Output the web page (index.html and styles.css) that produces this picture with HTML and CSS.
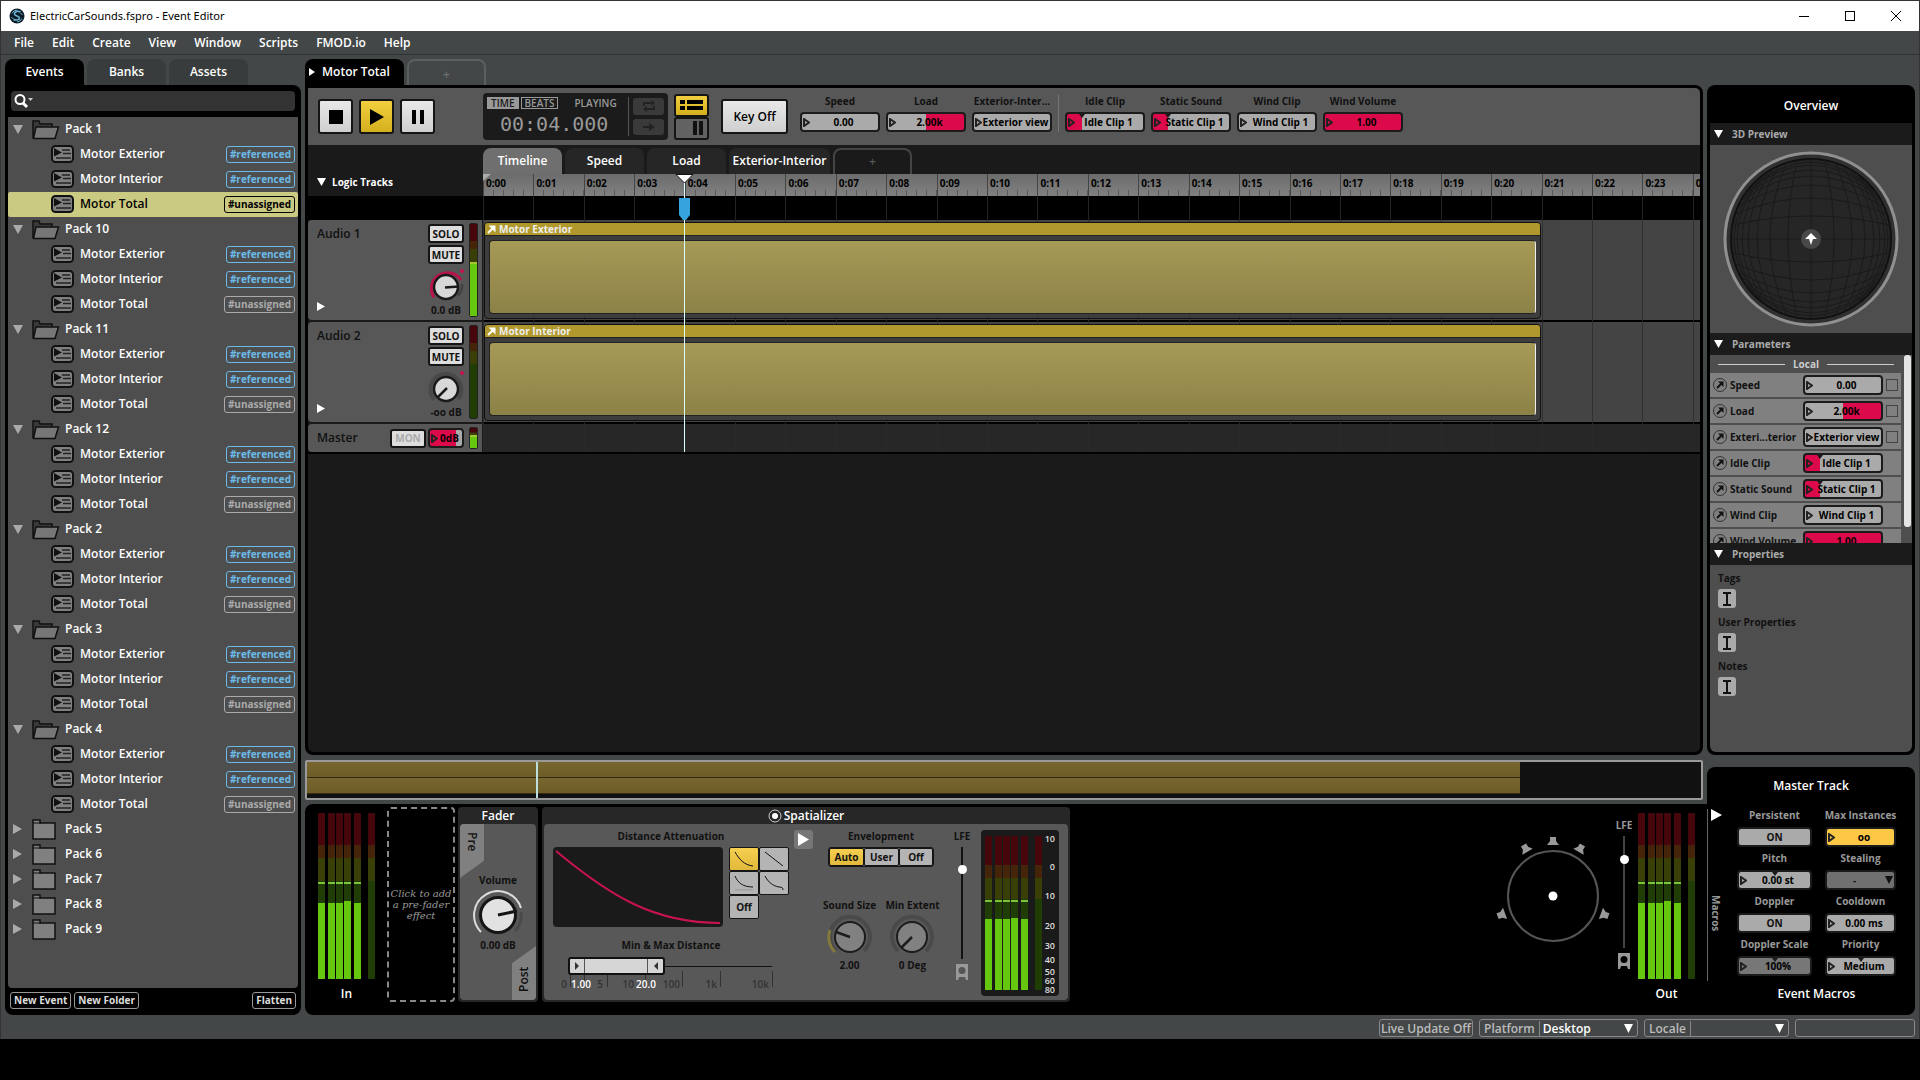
FILE: index.html
```
<!DOCTYPE html>
<html lang="en">
<head>
    <meta charset="UTF-8">
    <meta name="viewport" content="width=device-width, initial-scale=1.0">
    <title>ElectricCarSounds.fspro - Event Editor</title>
    <link rel="stylesheet" href="styles.css">
</head>
<body>

<div class="app">
    <header class="titlebar">
        <svg class="logo" width="16" height="16" viewBox="0 0 16 16">
            <circle cx="8" cy="8" r="7.5" fill="#0c1c26"/>
            <path d="M11.5 4C8 2.500 5 4 5.500 6.300c.5 2 5 1.500 5 3.700 0 2-3.500 2.500-6 1.500" fill="none" stroke="#6fb6d6" stroke-width="1.500"/>
            <path d="M3 5.500a6 6 0 0 1 5-3.500M13 10.500a6 6 0 0 1-5 3.500M2.500 9c.5 1 1 1.500 2 1.500M13.500 7c-.5-1-1-1.500-2-1.500" fill="none" stroke="#6fb6d6"/>
        </svg>
        <span class="title">ElectricCarSounds.fspro - Event Editor</span>
        <button class="win-btn" aria-label="Minimize"><svg width="10" height="10"><path d="M0 5.500h10" stroke="#000"/></svg></button>
        <button class="win-btn" aria-label="Maximize"><svg width="10" height="10"><rect x=".5" y=".5" width="9" height="9" fill="none" stroke="#000"/></svg></button>
        <button class="win-btn" aria-label="Close"><svg width="10" height="10"><path d="M0 0l10 10M10 0L0 10" stroke="#000"/></svg></button>
    </header>

    <nav class="menubar">
        <button>File</button>
        <button>Edit</button>
        <button>Create</button>
        <button>View</button>
        <button>Window</button>
        <button>Scripts</button>
        <button>FMOD.io</button>
        <button>Help</button>
    </nav>

    <div class="workspace">

        <!-- Event browser -->
        <aside class="browser">
            <div class="tabs">
                <button class="tab active">Events</button>
                <button class="tab">Banks</button>
                <button class="tab">Assets</button>
            </div>
            <div class="browser-panel">
                <label class="search">
                    <svg width="20" height="16" viewBox="0 0 20 16"><circle cx="6" cy="6.500" r="4.500" fill="none" stroke="#fff" stroke-width="2"/><path d="M9 10l4 4" stroke="#fff" stroke-width="3"/><path d="M14 5h5l-2.500 3z" fill="#ccc"/></svg>
                    <input type="text" aria-label="Search events">
                </label>
                <ul class="tree" id="tree"></ul>
                <div class="browser-footer">
                    <button>New Event</button>
                    <button>New Folder</button>
                    <button class="push">Flatten</button>
                </div>
            </div>
        </aside>

        <div class="main">
            <div class="upper">
                <div class="center">
                    <div class="tabs">
                        <button class="tab active event-tab"><svg width="6" height="8"><path d="M0 0l6 4-6 4z" fill="#fff"/></svg>Motor Total</button>
                        <button class="tab add">+</button>
                    </div>

                    <section class="editor">
                        <div class="toolbar">
                            <button class="transport" aria-label="Stop"><svg width="14" height="14"><rect width="14" height="14"/></svg></button>
                            <button class="transport on" aria-label="Play"><svg width="14" height="16"><path d="M0 0l14 8-14 8z"/></svg></button>
                            <button class="transport" aria-label="Pause"><svg width="12" height="14"><path d="M0 0h4v14H0zM8 0h4v14H8z"/></svg></button>

                            <div class="clock">
                                <div class="clock-main">
                                    <div class="clock-modes">
                                        <button class="mode on">TIME</button>
                                        <button class="mode">BEATS</button>
                                        <span>PLAYING</span>
                                    </div>
                                    <div class="time">00:04.000</div>
                                </div>
                                <div class="clock-side">
                                    <button aria-label="Loop"><svg width="14" height="12" fill="none" stroke="#222" stroke-width="2"><path d="M2 6V3h8M12 6v3H4"/><path d="M9 0l4 3-4 3zM5 6L1 9l4 3z" fill="#222" stroke="none"/></svg></button>
                                    <button aria-label="Follow"><svg width="12" height="8"><path d="M0 3h6V0l6 4-6 4V5H0z" fill="#222"/></svg></button>
                                </div>
                            </div>

                            <div class="view-toggle">
                                <button class="on" aria-label="Tracks view"><svg width="23" height="10"><path d="M0 0h5v4H0zM7 0h16v4H7zM0 6h5v4H0zM7 6h16v4H7z"/></svg></button>
                                <button aria-label="Mixer view"><svg width="23" height="14"><path d="M13 0h4v14h-4zM19 0h4v14h-4z" fill="#111"/></svg></button>
                            </div>

                            <button class="keyoff">Key Off</button>

                            <div class="param-strip" id="strip"></div>
                        </div>

                        <div class="timeline">
                            <div class="sheet-head">
                                <svg width="9" height="8"><path d="M0 0h9L4.500 8z" fill="#fff"/></svg>Logic Tracks
                            </div>
                            <div class="sheet">
                                <div class="tabs">
                                    <button class="tab current">Timeline</button>
                                    <button class="tab">Speed</button>
                                    <button class="tab">Load</button>
                                    <button class="tab wide">Exterior-Interior</button>
                                    <button class="tab add">+</button>
                                </div>
                                <div class="ruler" id="ruler"></div>
                            </div>

                            <div class="logic-head"></div>
                            <div class="lane logic-lane"></div>

                            <div class="track-head">
                                <span class="name">Audio 1</span>
                                <button class="fold" aria-label="Expand Audio 1"><svg width="8" height="9"><path d="M0 0l8 4.500L0 9z" fill="#fff"/></svg></button>
                                <div class="track-ctl">
                                    <button class="small-btn">SOLO</button>
                                    <button class="small-btn">MUTE</button>
                                    <svg width="38" height="34" viewBox="0 0 38 34"><path d="M7 29.500A15.500 15.500 0 1 1 34 12" fill="none" stroke="#b8134a" stroke-width="3"/><path d="M35 16a16 16 0 0 1-4 12" fill="none" stroke="#444" stroke-width="3"/><circle cx="35" cy="3" r="2" fill="#c8144c"/><circle cx="19" cy="19" r="12" fill="#d8d8d8" stroke="#1a1a1a" stroke-width="2.500"/><path d="M18 19.500l14-1" stroke="#1a1a1a" stroke-width="2.500"/></svg>
                                    <span class="db">0.0 dB</span>
                                </div>
                                <div class="track-meter" data-level="59"></div>
                            </div>
                            <div class="lane">
                                <article class="clip"><h4><svg width="9" height="9"><path d="M1 8l5-5M4 1.500h3.500V5z" stroke="#fff" stroke-width="2" fill="#fff"/></svg>Motor Exterior</h4><div class="wave"></div></article>
                            </div>

                            <div class="track-head">
                                <span class="name">Audio 2</span>
                                <button class="fold" aria-label="Expand Audio 2"><svg width="8" height="9"><path d="M0 0l8 4.500L0 9z" fill="#fff"/></svg></button>
                                <div class="track-ctl">
                                    <button class="small-btn">SOLO</button>
                                    <button class="small-btn">MUTE</button>
                                    <svg width="38" height="34" viewBox="0 0 38 34"><path d="M7 29.500A15.500 15.500 0 1 1 31 29" fill="none" stroke="#494949" stroke-width="4"/><circle cx="35" cy="3" r="2" fill="#c8144c"/><circle cx="19" cy="19" r="12" fill="#d8d8d8" stroke="#1a1a1a" stroke-width="2.500"/><path d="M20 18L11 27" stroke="#1a1a1a" stroke-width="2.500"/></svg>
                                    <span class="db">-oo dB</span>
                                </div>
                                <div class="track-meter" data-level="0"></div>
                            </div>
                            <div class="lane">
                                <article class="clip"><h4><svg width="9" height="9"><path d="M1 8l5-5M4 1.500h3.500V5z" stroke="#fff" stroke-width="2" fill="#fff"/></svg>Motor Interior</h4><div class="wave"></div></article>
                            </div>

                            <div class="track-head master">
                                <span class="name">Master</span>
                                <button class="small-btn mon">MON</button>
                                <label class="field gain"><svg width="7" height="9"><path d="M1 1l5 3.500L1 8z" fill="none" stroke="#222" stroke-width="2"/></svg><input type="text" value="0dB" aria-label="Master volume"></label>
                                <div class="track-meter" data-level="66"></div>
                            </div>
                            <div class="lane master-lane"></div>

                            <div class="grid-overlay" id="gridlines"></div>
                            <div class="playhead-area">
                                <div class="start-flag"></div>
                                <div class="playhead"><svg width="19" height="46" viewBox="0 0 19 46"><path d="M1 .5h17L9.500 9z" fill="#fff" stroke="#111"/><path d="M4 24h11v17l-4 5H8l-4-5z" fill="#37a3dc"/></svg></div>
                            </div>
                        </div>
                    </section>

                    <div class="overview-bar">
                        <div class="ov-track"></div>
                        <div class="ov-track"></div>
                        <div class="ov-head"></div>
                    </div>
                </div>

                <!-- Overview -->
                <aside class="side">
                    <section class="overview">
                        <h2>Overview</h2>
                        <h3><svg width="9" height="8"><path d="M0 0h9L4.500 8z" fill="#fff"/></svg>3D Preview</h3>
                        <div class="preview"><svg id="sphere" width="176" height="176" viewBox="-88 -88 176 176"></svg></div>
                        <h3><svg width="9" height="8"><path d="M0 0h9L4.500 8z" fill="#fff"/></svg>Parameters</h3>
                        <div class="params">
                            <div class="params-list">
                                <div class="local">Local</div>
                                <div id="params"></div>
                            </div>
                            <div class="scroll-thumb"></div>
                        </div>
                        <h3><svg width="9" height="8"><path d="M0 0h9L4.500 8z" fill="#fff"/></svg>Properties</h3>
                        <div class="props">
                            <span>Tags</span>
                            <button aria-label="Edit tags"><svg width="8" height="14"><path d="M0 1h3l1 1 1-1h3M4 2v10M0 13h3l1-1 1 1h3" fill="none" stroke="#111" stroke-width="2"/></svg></button>
                            <span>User Properties</span>
                            <button aria-label="Edit user properties"><svg width="8" height="14"><path d="M0 1h3l1 1 1-1h3M4 2v10M0 13h3l1-1 1 1h3" fill="none" stroke="#111" stroke-width="2"/></svg></button>
                            <span>Notes</span>
                            <button aria-label="Edit notes"><svg width="8" height="14"><path d="M0 1h3l1 1 1-1h3M4 2v10M0 13h3l1-1 1 1h3" fill="none" stroke="#111" stroke-width="2"/></svg></button>
                        </div>
                    </section>
                    <h2 class="master-title">Master Track</h2>
                </aside>
            </div>

            <!-- Signal chain -->
            <section class="deck">
                <div class="io">
                    <div class="meter"></div>
                    <strong>In</strong>
                </div>
                <button class="add-effect">Click to add a pre-fader effect</button>

                <div class="module fader">
                    <h3>Fader</h3>
                    <div class="module-body">
                        <span class="flag pre">Pre</span>
                        <span class="label">Volume</span>
                        <svg width="54" height="54" viewBox="-27 -27 54 54"><path d="M-17 17A24 24 0 1 1 23-7" fill="none" stroke="#ddd" stroke-width="2"/><path d="M23-3a23 23 0 0 1-6 19" fill="none" stroke="#4a4a4a" stroke-width="3"/><circle r="17.500" fill="#e2e2e2" stroke="#151515" stroke-width="3"/><path d="M0 0l19-4" stroke="#151515" stroke-width="3"/></svg>
                        <span class="label value">0.00 dB</span>
                        <span class="flag post">Post</span>
                    </div>
                </div>

                <div class="module spatializer">
                    <h3><svg width="14" height="14"><circle cx="7" cy="7" r="6" fill="none" stroke="#ccc"/><circle cx="7" cy="7" r="3" fill="#fff"/></svg>Spatializer</h3>
                    <div class="module-body">
                        <div class="distance">
                            <span class="label">Distance Attenuation</span>
                            <div class="curve-row">
                                <svg class="curve" width="170" height="80" viewBox="0 0 170 80"><rect width="170" height="80" rx="4" fill="#1a1a1a"/><path d="M3 4C58 50 102 76 167 76" fill="none" stroke="#c8134f" stroke-width="2"/></svg>
                                <div class="shapes">
                                    <button class="on" aria-label="Quadratic"><svg width="20" height="16"><path d="M1 1c4 7 9 13 18 14" fill="none" stroke="#111"/></svg></button>
                                    <button aria-label="Linear"><svg width="20" height="16"><path d="M1 1l18 14" stroke="#111"/></svg></button>
                                    <button aria-label="Inverse"><svg width="20" height="16"><path d="M1 1c3 7 8 11 18 11" fill="none" stroke="#111"/><path d="M1 15h18" stroke="#999"/></svg></button>
                                    <button aria-label="Inverse tapered"><svg width="20" height="16"><path d="M1 1c3 6 8 10 14 11 3 0 4 1 4 3" fill="none" stroke="#111"/></svg></button>
                                    <button>Off</button>
                                </div>
                            </div>
                            <span class="label">Min &amp; Max Distance</span>
                            <div class="minmax">
                                <svg width="210" height="36" viewBox="0 0 210 36">
                                    <path d="M96 9.500h108" stroke="#111"/>
                                    <path d="M2.500 14v16M16.500 14v10M39.500 14v16M77.500 14v10M114.500 14v16M152.500 14v16M204.500 14v16" stroke="#333"/>
                                    <rect x="1" y="1" width="95" height="16" rx="2" fill="#d6d6d6" stroke="#111" stroke-width="2"/>
                                    <path d="M16.500 2v14M79.500 2v14" stroke="#555"/>
                                    <path d="M7 5l4 4-4 4zM90 5l-4 4 4 4z" fill="#333"/>
                                </svg>
                                <input type="range" min="0" max="100" value="8" aria-label="Minimum distance">
                                <input type="range" min="0" max="100" value="43" aria-label="Maximum distance">
                                <div class="scale">
                                    <span>0</span><b>1.00</b><span>5</span><span>10</span><b>20.0</b><span>100</span><span>1k</span><span>10k</span>
                                </div>
                            </div>
                        </div>
                        <button class="expand" aria-label="Show more"><svg width="11" height="13"><path d="M0 0l11 6.500L0 13z" fill="#fff"/></svg></button>
                        <div class="envelop">
                            <span class="label">Envelopment</span>
                            <div class="segments"><button class="on">Auto</button><button>User</button><button>Off</button></div>
                            <div class="knobs">
                                <div>
                                    <span class="label">Sound Size</span>
                                    <svg width="46" height="46" viewBox="-23 -23 46 46"><path d="M-14 14A20 20 0 1 1 14 14" fill="none" stroke="#4a4a4a" stroke-width="4"/><path d="M-15 15A21 21 0 0 1-20-7" fill="none" stroke="#837a3d" stroke-width="3"/><circle r="15" fill="#818181" stroke="#1c1c1c" stroke-width="2"/><path d="M0 0l-14-5" stroke="#1c1c1c" stroke-width="2.500"/></svg>
                                    <span class="label">2.00</span>
                                </div>
                                <div>
                                    <span class="label">Min Extent</span>
                                    <svg width="46" height="46" viewBox="-23 -23 46 46"><path d="M-14 14A20 20 0 1 1 14 14" fill="none" stroke="#4a4a4a" stroke-width="4"/><circle r="15" fill="#818181" stroke="#1c1c1c" stroke-width="2"/><path d="M0 0l-11 11" stroke="#1c1c1c" stroke-width="2.500"/></svg>
                                    <span class="label">0 Deg</span>
                                </div>
                            </div>
                        </div>
                        <div class="lfe dark">
                            <label for="lfe1">LFE</label>
                            <input id="lfe1" type="range" min="0" max="100" value="83">
                            <svg width="12" height="16" viewBox="0 0 12 16"><path d="M0 0h12v16h-2l-1-3H3l-1 3H0z" fill="#999"/><circle cx="6" cy="6.500" r="3.500" fill="#555"/></svg>
                        </div>
                        <div class="meter-box">
                            <div class="meter"></div>
                            <div class="meter-scale"><span>10</span><span>0</span><span>10</span><span>20</span><span>30</span><span>40</span><span>50</span><span>60</span><span>80</span></div>
                        </div>
                    </div>
                </div>

                <div class="panner">
                    <svg width="118" height="110" viewBox="-59 -60 118 110">
                        <circle r="45" fill="none" stroke="#555" stroke-width="2"/>
                        <circle r="4.500" fill="#fff"/>
                        <g fill="#999">
                            <path id="spk" d="M-3-59h6v4l3 4H-6l3-4z"/>
                            <use href="#spk" transform="rotate(-30)"/>
                            <use href="#spk" transform="rotate(30)"/>
                            <use href="#spk" transform="rotate(-110)"/>
                            <use href="#spk" transform="rotate(110)"/>
                        </g>
                    </svg>
                </div>
                <div class="lfe">
                    <label for="lfe2">LFE</label>
                    <input id="lfe2" type="range" min="0" max="100" value="82">
                    <svg width="12" height="16" viewBox="0 0 12 16"><path d="M0 0h12v16h-2l-1-3H3l-1 3H0z" fill="#999"/><circle cx="6" cy="6.500" r="3.500" fill="#000"/></svg>
                </div>
                <div class="io out">
                    <div class="meter"></div>
                    <strong>Out</strong>
                </div>

                <div class="macros">
                    <div class="macros-side">
                        <svg width="11" height="12"><path d="M0 0l11 6-11 6z" fill="#fff"/></svg>
                        <span>Macros</span>
                    </div>
                    <div class="macros-main">
                        <div class="macro-grid">
                            <div class="macro"><span>Persistent</span><button>ON</button></div>
                            <div class="macro"><label for="m-max">Max Instances</label><div class="field gold"><svg width="7" height="9"><path d="M1 1l5 3.500L1 8z" fill="none" stroke="#222" stroke-width="2"/></svg><input id="m-max" type="text" value="oo"></div></div>
                            <div class="macro"><label for="m-pitch">Pitch</label><div class="field notch"><svg width="7" height="9"><path d="M1 1l5 3.500L1 8z" fill="none" stroke="#222" stroke-width="2"/></svg><input id="m-pitch" type="text" value="0.00 st"></div></div>
                            <div class="macro"><label for="m-steal">Stealing</label><div class="steal"><select id="m-steal"><option>-</option></select><svg width="8" height="8"><path d="M0 0h8L4 8z" fill="#111"/></svg></div></div>
                            <div class="macro"><span>Doppler</span><button>ON</button></div>
                            <div class="macro"><label for="m-cool">Cooldown</label><div class="field"><svg width="7" height="9"><path d="M1 1l5 3.500L1 8z" fill="none" stroke="#222" stroke-width="2"/></svg><input id="m-cool" type="text" value="0.00 ms"></div></div>
                            <div class="macro"><label for="m-dop">Doppler Scale</label><div class="field dim notch"><svg width="7" height="9"><path d="M1 1l5 3.500L1 8z" fill="none" stroke="#222" stroke-width="2"/></svg><input id="m-dop" type="text" value="100%"></div></div>
                            <div class="macro"><label for="m-pri">Priority</label><div class="field notch"><svg width="7" height="9"><path d="M1 1l5 3.500L1 8z" fill="none" stroke="#222" stroke-width="2"/></svg><input id="m-pri" type="text" value="Medium"></div></div>
                        </div>
                        <strong>Event Macros</strong>
                    </div>
                </div>
            </section>
        </div>
    </div>

    <footer class="status">
        <button class="live">Live Update Off</button>
        <div class="picker platform"><label for="platform">Platform</label><select id="platform"><option>Desktop</option></select><svg width="9" height="9"><path d="M0 0h9L4.500 9z" fill="#fff"/></svg></div>
        <div class="picker locale"><label for="locale">Locale</label><select id="locale"><option></option></select><svg width="9" height="9"><path d="M0 0h9L4.500 9z" fill="#fff"/></svg></div>
        <div class="status-box"></div>
    </footer>
</div>

<script src="app.js"></script>
</body>
</html>
```
FILE: styles.css
```
* {
    box-sizing: border-box;
}

body {
    margin: 0;
    background: #000;
    color: #fff;
    font: 600 12px/16px "Open Sans", "Noto Sans", sans-serif;
}

button, input, select {
    font: inherit;
    color: inherit;
    margin: 0;
    padding: 0;
    border: 0;
    background: none;
}

h2, h3, h4, ul {
    margin: 0;
    padding: 0;
    font: inherit;
    list-style: none;
}

strong, b {
    font-weight: inherit;
}

svg {
    display: block;
    flex: none;
}

.app {
    display: flex;
    flex-direction: column;
    min-height: calc(100vh - 41px);
    background: #434747;
    border: 1px solid #333;
    border-width: 1px 1px 0;
}

/* Title bar and menu */
.titlebar {
    display: flex;
    align-items: center;
    height: 30px;
    padding-left: 8px;
    background: #fff;
    color: #000;
    font: 11px/16px "Noto Sans", sans-serif;
}

.titlebar .title {
    flex: 1;
    margin-left: 5px;
}

.win-btn {
    width: 46px;
    height: 30px;
    display: grid;
    place-items: center;
}

.menubar {
    display: flex;
    gap: 18px;
    height: 24px;
    padding-left: 13px;
    border-bottom: 1px solid #303333;
}

.workspace {
    display: flex;
    flex: 1;
    gap: 4px;
    padding: 4px 4px 0;
}

/* Tabs */
.tabs {
    display: flex;
    gap: 3px;
    height: 26px;
}

.tab {
    width: 79px;
    background: #393c3c;
    border-radius: 8px 8px 0 0;
}

.tab.active {
    background: #000;
}

.tab.add {
    background: none;
    border: 2px solid #5c5f5f;
    border-bottom: 0;
    color: #6d7070;
    padding-top: 3px;
}

.event-tab {
    width: 99px;
    display: flex;
    align-items: center;
    gap: 7px;
    padding-left: 4px;
}

/* Browser */
.browser {
    width: 296px;
    display: flex;
    flex-direction: column;
}

.browser-panel {
    flex: 1;
    display: flex;
    flex-direction: column;
    background: #000;
    border-radius: 0 8px 8px 8px;
    padding: 6px 3px;
}

.search {
    display: flex;
    align-items: center;
    height: 20px;
    margin: 0 3px 6px;
    padding-left: 3px;
    background: #333;
    border-radius: 4px;
}

.search input {
    flex: 1;
    outline: 0;
}

.tree {
    flex: 1;
    background: #4e4e4e;
    border-radius: 0 0 4px 4px;
}

.tree li {
    display: flex;
    align-items: center;
    height: 25px;
    padding: 0 3px 1px 5px;
    border-radius: 2px;
}

.tree .twist {
    width: 19px;
}

.tree .folder-name {
    margin-left: 5px;
}

.tree .event {
    padding-left: 43px;
}

.tree .event-name {
    flex: 1;
    margin-left: 6px;
}

.tag {
    color: #6bbae8;
    border: 1px solid;
    border-radius: 3px;
    padding: 0 3px;
    margin-top: 1px;
    font-size: 10px;
    line-height: 15px;
    font-weight: bold;
}

.tag.unassigned {
    color: #aaa;
}

.tree .selected, .tree .selected .tag {
    color: #000;
}

.tree .selected {
    background: #cbca83;
}

.browser-footer {
    display: flex;
    gap: 3px;
    padding: 4px 2px 0;
}

.browser-footer button {
    height: 17px;
    padding: 0 3px;
    border: 1px solid #999;
    border-radius: 3px;
    color: #ddd;
    font-size: 10px;
    line-height: 15px;
    font-weight: bold;
}

.browser-footer .push {
    margin-left: auto;
}

/* Main area */
.main {
    flex: 1;
    min-width: 0;
    display: flex;
    flex-direction: column;
}

.upper {
    flex: 1;
    display: flex;
    gap: 4px;
}

.center {
    flex: 1;
    min-width: 0;
    display: flex;
    flex-direction: column;
    padding-bottom: 4px;
}

.editor {
    flex: 1;
    background: #1a1a1a;
    border: 3px solid #000;
    border-radius: 0 8px 8px 8px;
    overflow: hidden;
}

.toolbar {
    display: flex;
    align-items: center;
    height: 57px;
    padding-left: 10px;
    background: #575757;
}

.transport {
    width: 35px;
    height: 35px;
    margin-right: 6px;
    display: grid;
    place-items: center;
    border: 2px solid #151515;
    border-radius: 3px;
    background: linear-gradient(#e8e8e8, #cfcfcf);
}

.transport.on, .view-toggle .on {
    background: linear-gradient(#f1cf3e, #d5b01e);
}

.clock {
    display: flex;
    width: 185px;
    height: 47px;
    margin-left: 42px;
    background: #1b1b1b;
    border-radius: 4px;
    color: #999;
}

.clock-main {
    flex: 1;
    margin: 4px 0;
    padding-left: 4px;
    border-right: 1px solid #555;
}

.clock-modes {
    display: flex;
    gap: 2px;
    font-size: 10px;
    line-height: 12px;
}

.clock-modes span {
    margin-left: 14px;
}

.mode {
    padding: 0 3px;
    border: 1px solid #999;
    line-height: 10px;
}

.mode.on {
    background: #999;
    color: #1b1b1b;
}

.time {
    padding-left: 13px;
    font: 20px/30px "DejaVu Sans Mono", monospace;
}

.clock-side {
    display: flex;
    flex-direction: column;
    gap: 4px;
    padding: 5px 4px;
}

.clock-side button {
    width: 31px;
    height: 17px;
    display: grid;
    place-items: center;
    background: #3a3a3a;
    border-radius: 3px;
}

.view-toggle {
    display: flex;
    flex-direction: column;
    width: 35px;
    margin: 0 12px 0 6px;
}

.view-toggle button {
    height: 23px;
    display: grid;
    place-items: center;
    border: 2px solid #151515;
    border-radius: 3px;
    background: #626262;
}

.keyoff {
    width: 67px;
    height: 35px;
    border: 2px solid #151515;
    border-radius: 3px;
    background: linear-gradient(#e8e8e8, #cfcfcf);
    color: #000;
}

/* Parameter fields */
.param-strip {
    display: flex;
    gap: 6px;
    margin-left: 12px;
    padding-bottom: 8px;
    color: #111;
    font-size: 10px;
    font-weight: bold;
}

.param-strip label {
    width: 80px;
    text-align: center;
    line-height: 16px;
    white-space: nowrap;
}

.param-strip .field {
    margin-top: 3px;
}

.param-strip .divider {
    width: 1px;
    margin-top: 2px;
    background: #777;
}

.field {
    position: relative;
    display: block;
    height: 20px;
    border: 2px solid #1b1b1b;
    border-radius: 4px;
    background: #aaa;
    color: #000;
    font-size: 10px;
    font-weight: bold;
}

.field svg {
    position: absolute;
    left: 1px;
    top: 4px;
}

.field input {
    width: 100%;
    height: 16px;
    padding-left: 7px;
    text-align: center;
    display: block;
    outline: 0;
}

.field.high {
    background: linear-gradient(90deg, #aaa 50%, #dc0a4b 50%);
}

.field.low {
    background: linear-gradient(90deg, #dc0a4b 20%, #aaa 20%);
}

.field.full {
    background: #dc0a4b;
}

.field.gold {
    background: #fdc845;
}

.field.dim {
    background: #777;
}

.field.notch::before, .field.low::before {
    content: "";
    position: absolute;
    left: 50%;
    margin-left: -3px;
    border: 3px solid transparent;
    border-top: 4px solid #1b1b1b;
    border-bottom: 0;
}

.field.low::before {
    left: 20%;
}

/* Timeline */
.timeline {
    position: relative;
    display: grid;
    grid-template-columns: 175px 1fr;
    border-bottom: 2px solid #000;
}

.timeline .tabs {
    padding-top: 3px;
    height: 29px;
}

.timeline .tab {
    background: #262626;
}

.timeline .tab.current {
    background: #6f6f6f;
}

.timeline .tab.wide {
    width: 101px;
}

.timeline .tab.add {
    background: none;
    border-color: #444;
    color: #555;
    padding-top: 0;
}

.sheet-head {
    display: flex;
    align-items: flex-end;
    gap: 6px;
    padding: 0 0 6px 9px;
    font-size: 10px;
    font-weight: bold;
}

.sheet-head svg {
    margin-bottom: 4px;
}

.sheet {
    min-width: 0;
}

.ruler, .grid-overlay {
    display: grid;
    grid-template-columns: repeat(24, 63fr) 9fr;
    overflow: hidden;
}

.ruler {
    height: 22px;
    background: linear-gradient(#6c6c6c, #808080);
    color: #000;
    font-size: 10px;
    line-height: 18px;
    font-weight: bold;
}

.ruler span {
    min-width: 0;
    padding-left: 2px;
    border-left: 1px solid #444;
    background: repeating-linear-gradient(90deg, transparent 0 9px, #5a5a5a 9px 10px) 0 100% / 100% 6px no-repeat;
}

.grid-overlay {
    position: absolute;
    left: 175px;
    right: 0;
    top: 51px;
    bottom: 0;
    pointer-events: none;
}

.grid-overlay i {
    border-left: 1px solid rgba(44, 44, 44, .8);
}

.logic-head {
    height: 24px;
    background: #000;
}

.track-head {
    display: flex;
    height: 100px;
    margin: 0 1px 2px 0;
    padding: 3px 4px 3px 9px;
    background: #575757;
    border-radius: 4px 0 0 4px;
    color: #111;
    position: relative;
}

.track-head .name {
    flex: 1;
    margin-top: 3px;
}

.fold {
    position: absolute;
    left: 9px;
    bottom: 9px;
}

.track-ctl {
    width: 36px;
    margin: 1px 5px 0 0;
    display: flex;
    flex-direction: column;
    align-items: center;
    gap: 2px;
}

.track-ctl svg {
    margin-top: 2px;
}

.small-btn {
    width: 36px;
    height: 19px;
    flex: none;
    border: 2px solid #151515;
    border-radius: 3px;
    background: #ddd;
    color: #111;
    font-size: 10px;
    line-height: 14px;
    font-weight: bold;
}

.db {
    font-size: 10px;
    line-height: 12px;
    font-weight: bold;
    white-space: nowrap;
}

.track-meter {
    display: flex;
    align-items: flex-end;
    width: 9px;
    border: 1px solid #222;
    border-radius: 2px;
    background: linear-gradient(#47060b 19%, #45240a 19% 27%, #3a3f08 27% 41%, #1f3d05 41%);
}

.track-meter i {
    width: 100%;
    background: #66c80e;
    border-top: 2px solid #a5c832;
}

.track-head.master {
    height: 28px;
    margin-bottom: 0;
    gap: 2px;
    align-items: center;
}

.master .name {
    margin-top: 0;
}

.master .mon {
    color: #aaa;
}

.master .track-meter {
    margin-left: 3px;
    height: 22px;
}

.gain {
    width: 36px;
    background: linear-gradient(90deg, #dc0a4b 80%, #aaa 80%);
}

.lane {
    height: 100px;
    margin-bottom: 2px;
    padding-top: 2px;
    background: #444;
    box-shadow: 0 2px #000;
}

.logic-lane {
    margin-bottom: 0;
    height: 24px;
    background: #000;
    box-shadow: none;
}

.master-lane {
    height: 28px;
    margin-bottom: 0;
    background: #272727;
}

.clip {
    position: relative;
    z-index: 1;
    width: calc(87% - 2px);
    height: 97px;
    border: 1px solid #111;
    border-radius: 4px;
    background: rgba(60, 60, 60, .8);
    overflow: hidden;
    margin-left: 1px;
}

.clip h4 {
    display: flex;
    align-items: center;
    gap: 3px;
    height: 13px;
    padding-left: 2px;
    background: #b0982c;
    border-bottom: 1px solid #222;
    color: #eee;
    font-size: 10px;
    line-height: 12px;
    font-weight: bold;
}

.wave {
    height: 74px;
    margin: 4px 4px 0;
    border: 1px solid #222;
    border-right-color: #eee;
    border-radius: 4px;
    background: linear-gradient(rgba(172, 159, 89, .95), rgba(145, 133, 71, .95));
}

.playhead-area {
    position: absolute;
    z-index: 2;
    left: 175px;
    right: 0;
    top: 29px;
    bottom: 0;
    pointer-events: none;
}

.start-flag {
    border-top: 7px solid #aaa;
    border-right: 8px solid transparent;
    width: 0;
}

.playhead {
    position: absolute;
    left: 16.5%;
    top: 0;
    bottom: 0;
    border-left: 1px solid #dff;
}

.playhead svg {
    position: absolute;
    left: -10px;
}

.overview-bar {
    position: relative;
    height: 40px;
    margin-top: 5px;
    border: 2px solid #9a9a9a;
    border-radius: 2px;
    background: #111;
}

.ov-track {
    width: 87%;
    height: 16px;
    background: linear-gradient(#776630, #6d5c26);
    border-bottom: 1px solid #332c12;
}

.ov-head {
    position: absolute;
    left: 16.4%;
    top: 0;
    bottom: 0;
    width: 2px;
    background: #bdd;
}

/* Right side */
.side {
    width: 208px;
    padding-top: 26px;
    display: flex;
    flex-direction: column;
}

.overview {
    flex: 1;
    display: flex;
    flex-direction: column;
    background: #000;
    border-radius: 8px;
    padding: 0 3px 3px;
}

.overview h2 {
    height: 38px;
    text-align: center;
    line-height: 42px;
}

.overview h3 {
    display: flex;
    align-items: center;
    gap: 9px;
    height: 22px;
    padding-left: 4px;
    background: #1b1b1b;
    color: #aaa;
    font-size: 10px;
    font-weight: bold;
}

.preview {
    height: 188px;
    display: grid;
    place-items: center;
    background: #4e4e4e;
}

.params {
    display: flex;
    height: 188px;
    overflow: hidden;
    background: #4e4e4e;
    color: #111;
    font-size: 10px;
    font-weight: bold;
}

.params-list {
    width: 191px;
}

.local {
    display: flex;
    align-items: center;
    gap: 8px;
    height: 18px;
    padding: 0 7px 0 8px;
    color: #ccc;
}

.local::before, .local::after {
    content: "";
    flex: 1;
    height: 1px;
    background: #ccc;
}

.param-row {
    display: flex;
    align-items: center;
    height: 24px;
    margin-bottom: 2px;
    padding: 0 3px;
    background: #808080;
}

.param-row label {
    flex: 1;
    margin-left: 3px;
    white-space: nowrap;
}

.param-row .field {
    width: 80px;
}

.param-row input[type="checkbox"] {
    appearance: none;
    width: 12px;
    height: 12px;
    margin-left: 3px;
    border: 1px solid #444;
}

.param-row .blank {
    width: 15px;
}

.scroll-thumb {
    width: 7px;
    height: 172px;
    margin-left: 3px;
    border-radius: 3px;
    background: #e4e4e4;
}

.props {
    flex: 1;
    display: flex;
    flex-direction: column;
    align-items: flex-start;
    padding: 5px 8px;
    background: #4e4e4e;
    border-radius: 0 0 6px 6px;
    color: #111;
    font-size: 10px;
    font-weight: bold;
}

.props button {
    width: 18px;
    height: 19px;
    margin: 3px 0 6px;
    display: grid;
    place-items: center;
    background: #aaa;
    border-radius: 3px;
}

.master-title {
    height: 37px;
    margin-top: 12px;
    background: #000;
    border-radius: 8px 8px 0 0;
    text-align: center;
    line-height: 37px;
}

/* Deck */
.deck {
    display: flex;
    height: 211px;
    padding: 3px 0 13px 13px;
    background: #000;
    border-radius: 8px 0 8px 8px;
}

.io {
    width: 57px;
    padding-top: 6px;
    text-align: center;
}

.io strong {
    display: block;
    margin-top: 7px;
}

.meter {
    display: flex;
    height: 166px;
    gap: 1px;
}

.meter i {
    position: relative;
    width: 7px;
    background: linear-gradient(#47060b 19%, #45240a 19% 27%, #3a3f08 27% 41%, #1f3d05 41%);
    border-radius: 1px;
}

.meter i:nth-child(2), .meter i:nth-child(5) {
    margin-left: 2px;
}

.meter i:nth-child(6) {
    margin-left: 6px;
}

.meter i::before {
    content: "";
    position: absolute;
    left: 0;
    right: 0;
    bottom: 0;
    height: var(--level);
    background: #66c80e;
}

.meter i::after {
    content: "";
    position: absolute;
    left: 0;
    right: 0;
    bottom: 57%;
    height: 2px;
    background: #7cc43a;
}

.meter i:last-child::after {
    display: none;
}

.add-effect {
    width: 68px;
    margin-left: 12px;
    border: 2px dashed #888;
    border-radius: 4px;
    color: #999;
    font: italic 10px/11px "DejaVu Serif", serif;
}

.module {
    display: flex;
    flex-direction: column;
    margin-left: 3px;
    padding: 0 2px 2px;
    background: #272727;
    border-radius: 4px;
}

.module h3 {
    display: flex;
    justify-content: center;
    align-items: center;
    gap: 2px;
    height: 17px;
}

.module-body {
    flex: 1;
    background: #585858;
    border-radius: 4px;
    color: #111;
}

.label {
    display: block;
    font-size: 10px;
    line-height: 16px;
    font-weight: bold;
    text-align: center;
    white-space: nowrap;
}

.fader {
    width: 80px;
}

.fader .module-body {
    position: relative;
    display: flex;
    flex-direction: column;
    align-items: center;
    padding-top: 48px;
}

.fader .value {
    margin-top: -5px;
}

.flag {
    position: absolute;
    width: 24px;
    height: 54px;
    padding: 8px 4px 0;
    background: #808080;
    writing-mode: vertical-rl;
    clip-path: polygon(0 0, 100% 0, 100% 68%, 0 100%);
}

.pre {
    left: 0;
    top: 0;
    border-radius: 4px 0 0 0;
}

.post {
    right: 0;
    bottom: 0;
    border-radius: 4px 0 0 0;
    transform: rotate(180deg);
}

.spatializer {
    width: 528px;
    margin-left: 4px;
}

.spatializer .module-body {
    display: flex;
    padding: 4px 9px;
}

.distance {
    width: 236px;
}

.curve-row {
    display: flex;
    gap: 6px;
    margin: 3px 0 10px;
}

.shapes {
    display: grid;
    grid-template-columns: 30px 30px;
    align-content: start;
}

.shapes button {
    height: 24px;
    display: grid;
    place-items: center;
    border: 1px solid #151515;
    border-radius: 2px;
    background: #b4b4b4;
    font-size: 10px;
    font-weight: bold;
}

.shapes .on, .segments .on {
    background: linear-gradient(#f6cf50, #e2b93a);
}

.minmax {
    position: relative;
    margin: 4px 0 0 15px;
    width: 210px;
}

.minmax input {
    position: absolute;
    left: 0;
    top: 0;
    width: 204px;
    height: 18px;
    opacity: 0;
}

.scale {
    position: absolute;
    top: 21px;
    left: 0;
    display: grid;
    grid-template-columns: 9px 24px 12px 31px 22px 24px 37px 52px;
    justify-items: end;
    margin-left: -10px;
    font-size: 10px;
    line-height: 12px;
    color: #333;
}

.scale b {
    color: #fff;
}

.expand {
    width: 19px;
    height: 19px;
    margin: 2px 0 0 5px;
    display: grid;
    place-items: center;
    background: #777;
    border-radius: 3px;
}

.envelop {
    width: 126px;
    margin-left: 5px;
}

.segments {
    display: grid;
    grid-template-columns: 35px 35px 34px;
    width: 106px;
    margin: 3px auto 30px;
    border: 1px solid #151515;
    border-radius: 3px;
}

.segments button {
    height: 18px;
    border: 1px solid #151515;
    border-radius: 2px;
    background: #b4b4b4;
    font-size: 10px;
    line-height: 14px;
    font-weight: bold;
}

.knobs {
    display: grid;
    grid-template-columns: 1fr 1fr;
    justify-items: center;
}

.knobs > div {
    display: flex;
    flex-direction: column;
    align-items: center;
}

.knobs svg {
    margin: 1px 0 -3px;
}

.lfe {
    width: 24px;
    padding-top: 10px;
    display: flex;
    flex-direction: column;
    align-items: center;
    color: #999;
    font-size: 10px;
    font-weight: bold;
}

.lfe.dark {
    padding-top: 0;
    margin-left: 6px;
    color: #111;
}

.lfe input {
    appearance: none;
    writing-mode: vertical-lr;
    direction: rtl;
    width: 10px;
    height: 112px;
    margin: 3px 0 5px;
    background: linear-gradient(#444, #444) center / 2px 100% no-repeat;
}

.lfe.dark input {
    background-image: linear-gradient(#111, #111);
}

.lfe input::-webkit-slider-thumb {
    appearance: none;
    width: 9px;
    height: 9px;
    border-radius: 50%;
    background: #fff;
}

.meter-box {
    display: flex;
    justify-content: space-between;
    width: 78px;
    height: 166px;
    margin: 2px 0 0 auto;
    padding: 6px 4px;
    background: #1a1a1a;
    border-radius: 4px;
}

.meter-box .meter {
    height: 154px;
}

.meter-scale {
    display: grid;
    grid-template-rows: 28px 29px 30px 20px 14px 12px 9px 9px 9px;
    margin-top: -2px;
    justify-items: end;
    color: #ddd;
    font-size: 9px;
    line-height: 9px;
}

.panner {
    margin: 29px 0 0 auto;
}

.deck > .lfe {
    margin-right: 2px;
}

.macros {
    display: flex;
    width: 208px;
    margin-left: 12px;
}

.macros-side {
    width: 24px;
    height: 172px;
    margin-top: 2px;
    padding-left: 3px;
    border-left: 1px solid #666;
    color: #999;
    font-size: 10px;
    font-weight: bold;
}

.macros-side span {
    display: block;
    width: 10px;
    margin-top: 74px;
    writing-mode: vertical-rl;
    line-height: 10px;
}

.macros-main {
    width: 171px;
    text-align: center;
}

.macros-main strong {
    display: block;
    margin-top: 7px;
}

.macro-grid {
    display: grid;
    grid-template-columns: 75px 71px;
    column-gap: 13px;
    margin-left: 6px;
}

.macro {
    height: 43px;
    color: #999;
    font-size: 10px;
    font-weight: bold;
    display: flex;
    flex-direction: column;
}

.macro > label, .macro > span {
    margin: 0 -10px 4px;
    white-space: nowrap;
}

.macro button {
    height: 20px;
    border: 2px solid #1b1b1b;
    border-radius: 4px;
    background: #aaa;
    color: #111;
}

.steal {
    position: relative;
}

.steal select, .picker select {
    appearance: none;
    outline: 0;
}

.steal select {
    width: 100%;
    height: 20px;
    border: 2px solid #1b1b1b;
    border-radius: 4px;
    background: #707070;
    color: #111;
    padding-left: 26px;
}

.steal svg {
    position: absolute;
    right: 3px;
    top: 6px;
}

/* Status bar */
.status {
    display: flex;
    justify-content: flex-end;
    align-items: center;
    gap: 6px;
    height: 24px;
    padding: 2px 4px 0 0;
    color: #bbb;
}

.live, .picker, .status-box {
    height: 18px;
    border: 1px solid #888;
    border-radius: 3px;
    line-height: 15px;
}

.live {
    width: 94px;
    white-space: nowrap;
}

.picker {
    display: flex;
    align-items: center;
}

.platform {
    width: 159px;
}

.locale {
    width: 145px;
}

.picker label {
    padding: 0 4px;
    border-right: 1px solid #888;
}

.picker select {
    flex: 1;
    min-width: 0;
    padding-left: 3px;
    color: #fff;
}

.picker svg {
    margin-right: 4px;
}

.status-box {
    width: 120px;
}
```
FILE: app.js
```
// Event tree
const openPacks = [1, 10, 11, 12, 2, 3, 4];
const closedPacks = [5, 6, 7, 8, 9];
const events = [["Motor Exterior", "referenced"], ["Motor Interior", "referenced"], ["Motor Total", "unassigned"]];

const openFolder = '<svg width="28" height="21" viewBox="0 0 28 21"><path d="M1 19V2h6l1 3h12v3" fill="#3a3a3a" stroke="#111" stroke-width="1.500"/><path d="M1.500 19.500L4 8h22.500l-3.500 11.500z" fill="#777" stroke="#111" stroke-width="1.500"/></svg>';
const closedFolder = '<svg width="28" height="21" viewBox="0 0 28 21"><path d="M1 20V1h7v3h15v16z" fill="#808080" stroke="#111" stroke-width="1.500"/><path d="M1 4h8" stroke="#111"/></svg>';
const eventIcon = '<svg width="23" height="18" viewBox="0 0 23 18"><rect x="1" y="1" width="21" height="16" rx="3.500" fill="#808080" stroke="#111" stroke-width="2"/><path d="M3 3l8 4.500-8 4z" fill="#111"/><path d="M11 5h8M12 8.500h8M5 13h15" stroke="#222" stroke-width="1.500"/></svg>';

let tree = "";
openPacks.forEach(p => {
    tree += `<li><button class="twist" aria-label="Collapse"><svg width="10" height="9"><path d="M0 0h10L5 9z" fill="#aaa"/></svg></button>${openFolder}<span class="folder-name">Pack ${p}</span></li>`;
    events.forEach(([name, tag]) => {
        const selected = p === 1 && name === "Motor Total" ? " selected" : "";
        tree += `<li class="event${selected}">${eventIcon}<span class="event-name">${name}</span><span class="tag ${tag}">#${tag}</span></li>`;
    });
});
closedPacks.forEach(p => {
    tree += `<li><button class="twist" aria-label="Expand"><svg width="9" height="10"><path d="M0 0l9 5-9 5z" fill="#aaa"/></svg></button>${closedFolder}<span class="folder-name">Pack ${p}</span></li>`;
});
document.getElementById("tree").innerHTML = tree;

// Parameters: strip label, list label, value, fill
const params = [
    ["Speed", "Speed", "0.00", ""],
    ["Load", "Load", "2.00k", "high"],
    ["Exterior-Inter...", "Exteri...terior", "Exterior view", ""],
    ["Idle Clip", "Idle Clip", "Idle Clip 1", "low"],
    ["Static Sound", "Static Sound", "Static Clip 1", "low"],
    ["Wind Clip", "Wind Clip", "Wind Clip 1", ""],
    ["Wind Volume", "Wind Volume", "1.00", "full"]
];
const arrow = '<svg width="7" height="9"><path d="M1 1l5 3.500L1 8z" fill="none" stroke="#222" stroke-width="2"/></svg>';

document.getElementById("strip").innerHTML = params.map((p, i) =>
    (i === 3 ? '<div class="divider"></div>' : "") +
    `<label>${p[0]}<span class="field ${p[3]}">${arrow}<input type="text" value="${p[2]}"></span></label>`
).join("");

document.getElementById("params").innerHTML = params.map((p, i) =>
    `<div class="param-row"><svg width="14" height="14"><circle cx="7" cy="7" r="6.500" fill="none" stroke="#333"/><path d="M4 10l4-4" stroke="#111" stroke-width="2"/><path d="M5 3.500h5.500V9z" fill="#111"/></svg>
    <label for="p${i}">${p[1]}</label>
    <span class="field ${p[3]}">${arrow}<input id="p${i}" type="text" value="${p[2]}"></span>
    ${i < 3 ? `<input type="checkbox" aria-label="Hold ${p[0]}">` : '<span class="blank"></span>'}</div>`
).join("");

// Ruler and grid lines
let ruler = "";
let lines = "";
for (let s = 0; s <= 24; s++) {
    ruler += `<span>0:${String(s).padStart(2, "0")}</span>`;
    lines += "<i></i>";
}
document.getElementById("ruler").innerHTML = ruler;
document.getElementById("gridlines").innerHTML = lines;

// Meters
document.querySelectorAll(".meter").forEach(m => {
    m.innerHTML = [46, 46, 46, 47, 46, 0].map(v => `<i style="--level: ${v}%"></i>`).join("");
});
document.querySelectorAll(".track-meter").forEach(m => {
    if (m.dataset.level > 0) {
        m.innerHTML = `<i style="height: ${m.dataset.level}%"></i>`;
    }
});

// 3D preview globe
let globe = '<circle r="86" fill="#303030" stroke="#909090" stroke-width="3"/><circle r="80" fill="#262626" stroke="#111" stroke-width="2"/><g fill="none" stroke="#1a1a1a"><path d="M-80 0H80M0-80V80"/>';
[23, 41, 54, 63, 69, 74, 77].forEach(d => {
    const a = d * 0.6;
    const c = d * 1.4;
    const e = Math.sqrt(80 * 80 - a * a);
    globe += `<path d="M${-e} ${a}Q0 ${c} ${e} ${a}M${-e} ${-a}Q0 ${-c} ${e} ${-a}M${a} ${-e}Q${c} 0 ${a} ${e}M${-a} ${-e}Q${-c} 0 ${-a} ${e}"/>`;
});
globe += '</g><circle r="10" fill="#484848"/><path d="M0-6l6 6H2L0 6-2 0h-4z" fill="#fff"/>';
document.getElementById("sphere").innerHTML = globe;
```
